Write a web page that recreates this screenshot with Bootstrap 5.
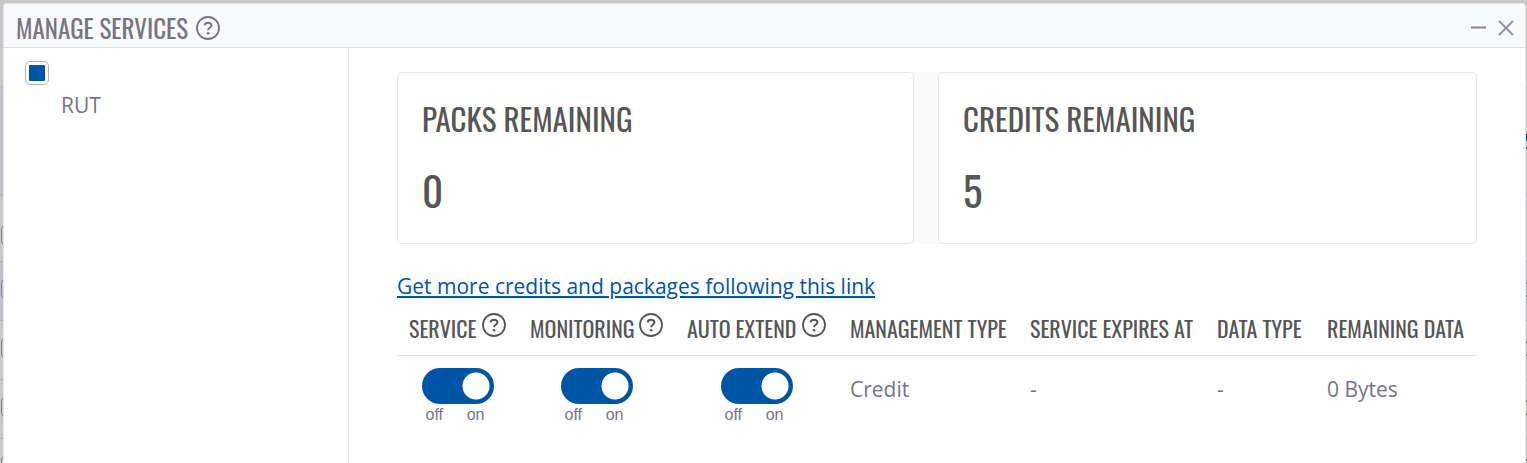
<!DOCTYPE html>
<html lang="en">
<head>
<meta charset="utf-8">
<meta name="viewport" content="width=device-width, initial-scale=1">
<title>Manage services</title>
<link href="https://cdn.jsdelivr.net/npm/bootstrap@5.3.0/dist/css/bootstrap.min.css" rel="stylesheet">
<style>
  :root { --brand: #0054a6; --ink: #565656; --soft: #777582; --line: #e4e4e6; }
  body { background: #c9c9ca; color: var(--soft); font: 21px/28px "Open Sans", "Noto Sans", sans-serif; overflow: hidden; }
  .display-face, .service-table th { font-family: Oswald, "Liberation Sans Narrow", "Liberation Sans", sans-serif; font-weight: 400; text-transform: uppercase; }

  /* dimmed page behind the dialog */
  .page-behind { position: absolute; inset: 0; z-index: -1; overflow: hidden; }
  .behind-top { height: 86px; }
  .behind-head { height: 109px; background: #c3c4c9; border-top: 1px solid #b8b8bc; }
  .behind-row { height: 59px; border-top: 1px solid #b4b4b6; padding-bottom: 4px; }
  .behind-row.first { height: 66px; padding: 12px 0 0; }
  .behind-row.picked { background: #bec2ca; }
  .behind-box { width: 20px; height: 20px; margin-left: 1px; border: 1px solid #85858a; border-radius: 4px; }
  .behind-end { width: 1px; height: 15px; border: solid #6c7283; border-width: 2px 0; }
  .behind-head .behind-end { border-color: var(--brand); border-width: 7px 0 2px; }

  .dialog-frame { margin: 3px 1px 0 3px; min-height: calc(100vh - 3px); background: #fff; border: 1px solid #e4e5e8; border-bottom: 0; border-radius: 4px 4px 0 0; }
  .dialog-head { height: 44px; padding: 4px 10px 0 12px; background: #f9fafc; border-bottom: 1px solid #dfe0e4; border-radius: 4px 4px 0 0; }
  .dialog-title { font-size: 25px; line-height: 38px; margin: 0; }
  .plain-btn { border: 0; padding: 0; background: none; color: inherit; line-height: 0; }
  .side-pane { width: 345px; border-right: 1px solid var(--line); padding: 13px 21px; }
  .pick-box { appearance: none; display: block; width: 24px; height: 24px; margin: 0; border: 1px solid #b5b5b5; border-radius: 5px; background: #fff; padding: 3px; }
  .pick-box:checked::before { content: ""; display: block; width: 16px; height: 16px; border-radius: 1px; background: var(--brand); }
  .pick-label { display: block; margin: 4px 0 0 36px; line-height: 32px; }
  .main-pane { padding: 24px 48px; min-width: 0; }

  .stat-row { gap: 24px; background: linear-gradient(90deg, #fff 40%, #f9f9fa 50%, #fff 60%); }
  .stat-card { border: 1px solid #e6e7e8; border-radius: 5px; background: #fff; color: var(--ink); padding: 23px 24px; height: 172px; }
  .packs { flex: 467 1 0; } .credits { flex: 489 1 0; }
  .stat-card h2 { font-size: 31px; line-height: 44px; margin: 0 0 24px; }
  .stat-card p { font-size: 41px; line-height: 52px; margin: 0; }

  .more-link { display: inline-block; margin-top: 27px; color: var(--brand); line-height: 30px; }
  .service-table { table-layout: fixed; width: 100%; }
  .service-table th { color: var(--ink); font-size: 22px; line-height: 24px; height: 54px; padding: 0 12px; white-space: nowrap; border-bottom: 1px solid var(--line); vertical-align: middle; }
  .service-table th .plain-btn { padding-bottom: 6px; }
  .service-table td { padding: 12px 12px 0; vertical-align: top; }
  .service-table td.value { padding-top: 19px; }
  .c1 { width: 121px; } .c2 { width: 157px; } .c3 { width: 163px; } .c4 { width: 180px; } .c5 { width: 187px; } .c6 { width: 110px; } .c7 { width: 162px; }

  .toggle { width: 72px; margin: 0 auto; display: block; }
  .toggle input { appearance: none; display: block; width: 72px; height: 36px; margin: 0; border-radius: 18px; background: radial-gradient(circle at 54px 18px, #fff 13px, transparent 14px) var(--brand); }
  .toggle .marks { font: 16px/22px "Liberation Sans", sans-serif; display: flex; justify-content: space-between; padding: 0 9px 0 4px; }
</style>
<script src="https://cdn.jsdelivr.net/npm/bootstrap@5.3.0/dist/js/bootstrap.bundle.min.js"></script>
</head>
<body>
<svg class="d-none" aria-hidden="true">
  <symbol id="help" viewBox="0 0 24 24"><circle cx="12" cy="12" r="11" fill="none" stroke="currentColor" stroke-width="1.8"/><path d="M8.500 9.400C8.900 7.600 10.200 6.800 12 6.800s3.400 1 3.400 2.800c0 2.200-3.300 2.200-3.300 4.600" fill="none" stroke="currentColor" stroke-width="2"/><circle cx="12.100" cy="17.300" r="1.300" fill="currentColor"/></symbol>
</svg>

<div class="page-behind" aria-hidden="true">
  <div class="behind-top"></div>
  <div class="behind-head d-flex align-items-center justify-content-end"><div class="behind-end"></div></div>
  <div class="behind-row first d-flex align-items-center"><div class="behind-box"></div></div>
  <div class="behind-row picked d-flex align-items-center justify-content-between"><div class="behind-box"></div><div class="behind-end"></div></div>
  <div class="behind-row d-flex align-items-center justify-content-between"><div class="behind-box"></div><div class="behind-end"></div></div>
  <div class="behind-row d-flex align-items-center justify-content-between"><div class="behind-box"></div><div class="behind-end"></div></div>
  <div class="behind-row d-flex align-items-center justify-content-between"><div class="behind-box"></div><div class="behind-end"></div></div>
</div>

<div class="dialog-frame d-flex flex-column" role="dialog" aria-labelledby="dialog-title">
  <header class="dialog-head d-flex align-items-center">
    <h1 class="dialog-title display-face" id="dialog-title">Manage services</h1>
    <button class="plain-btn ms-2" type="button" aria-label="Help"><svg width="24" height="24"><use href="#help"/></svg></button>
    <div class="ms-auto d-flex gap-2">
      <button class="plain-btn" type="button" aria-label="Minimize"><svg width="20" height="18"><path d="M2 8.500h15" stroke="#85848f" stroke-width="2"/></svg></button>
      <button class="plain-btn" type="button" aria-label="Close"><svg width="18" height="18"><path d="M2 2l14 14M16 2L2 16" stroke="#96959f" stroke-width="2"/></svg></button>
    </div>
  </header>
  <div class="d-flex flex-grow-1">
    <aside class="side-pane flex-shrink-0">
      <input class="pick-box" type="checkbox" id="rut" checked>
      <label class="pick-label" for="rut">RUT</label>
    </aside>
    <main class="main-pane flex-grow-1">
      <div class="stat-row d-flex">
        <section class="stat-card packs"><h2 class="display-face">Packs remaining</h2><p class="display-face">0</p></section>
        <section class="stat-card credits"><h2 class="display-face">Credits remaining</h2><p class="display-face">5</p></section>
      </div>
      <a class="more-link" href="#">Get more credits and packages following this link</a>
      <table class="service-table">
        <colgroup><col class="c1"><col class="c2"><col class="c3"><col class="c4"><col class="c5"><col class="c6"><col class="c7"></colgroup>
        <thead><tr>
          <th><span class="d-flex justify-content-between align-items-center">Service <button class="plain-btn" type="button" aria-label="About service"><svg width="24" height="24"><use href="#help"/></svg></button></span></th>
          <th><span class="d-flex justify-content-between align-items-center">Monitoring <button class="plain-btn" type="button" aria-label="About monitoring"><svg width="24" height="24"><use href="#help"/></svg></button></span></th>
          <th><span class="d-flex justify-content-between align-items-center">Auto extend <button class="plain-btn" type="button" aria-label="About auto extend"><svg width="24" height="24"><use href="#help"/></svg></button></span></th>
          <th>Management type</th><th>Service expires at</th><th>Data type</th><th>Remaining data</th>
        </tr></thead>
        <tbody><tr>
          <td><label class="toggle"><input type="checkbox" role="switch" aria-label="Service" checked><span class="marks"><span>off</span><span>on</span></span></label></td>
          <td><label class="toggle"><input type="checkbox" role="switch" aria-label="Monitoring" checked><span class="marks"><span>off</span><span>on</span></span></label></td>
          <td><label class="toggle"><input type="checkbox" role="switch" aria-label="Auto extend" checked><span class="marks"><span>off</span><span>on</span></span></label></td>
          <td class="value">Credit</td><td class="value">-</td><td class="value">-</td><td class="value">0 Bytes</td>
        </tr></tbody>
      </table>
    </main>
  </div>
</div>
</body>
</html>
